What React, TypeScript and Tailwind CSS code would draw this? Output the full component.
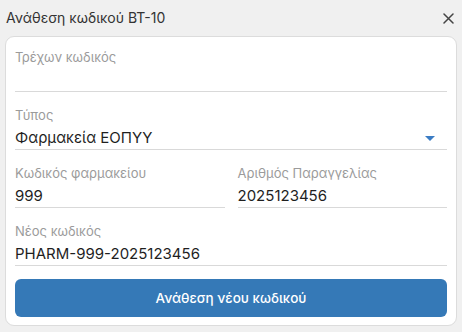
import React from "react";

function Field({ label, value, select }: { label: string; value: string; select?: boolean }) {
  return (
    <div className="flex flex-col border-b border-[#d9d9d9]">
      <div className="text-[13px] leading-[20px] text-[#9b9b9b]">{label}</div>
      <div className="flex items-center justify-between pt-[2px] h-[24px]">
        <span className="text-[15px] leading-[22px] text-[#1f1f1f]">{value}</span>
        {select && (
          <svg width="10" height="5" viewBox="0 0 10 5" className="mr-[12px] mt-[1px]">
            <path d="M0 0 L10 0 L5 5 Z" fill="#3b7cc4" />
          </svg>
        )}
      </div>
    </div>
  );
}

export default function App() {
  return (
    <div
      className="w-[462px] h-[332px] bg-[#f0f0f0] overflow-hidden"
      style={{ fontFamily: "Inter, 'Noto Sans', sans-serif" }}
    >
      <div className="h-9 flex items-center justify-between pl-[6px] pr-[8px]">
        <span className="text-[14px] leading-[20px] text-[#333333]">Ανάθεση κωδικού BT-10</span>
        <svg width="11" height="11" viewBox="0 0 11 11">
          <path d="M1 1 L10 10 M10 1 L1 10" stroke="#444444" strokeWidth="1.5" strokeLinecap="round" />
        </svg>
      </div>
      <div className="mx-[5px] bg-white border border-[#dcdcdc] rounded-[9px] pt-[10px] pb-[8px] px-[9px] flex flex-col gap-[13px]">
        <Field label="Τρέχων κωδικός" value="" />
        <Field label="Τύπος" value="Φαρμακεία ΕΟΠΥΥ" select />
        <div className="grid grid-cols-2 gap-x-[13px]">
          <Field label="Κωδικός φαρμακείου" value="999" />
          <Field label="Αριθμός Παραγγελίας" value="2025123456" />
        </div>
        <Field label="Νέος κωδικός" value="PHARM-999-2025123456" />
        <button className="h-[38px] w-full rounded-[6px] bg-[#3579b7] text-white text-[13.5px] font-medium">
          Ανάθεση νέου κωδικού
        </button>
      </div>
    </div>
  );
}
